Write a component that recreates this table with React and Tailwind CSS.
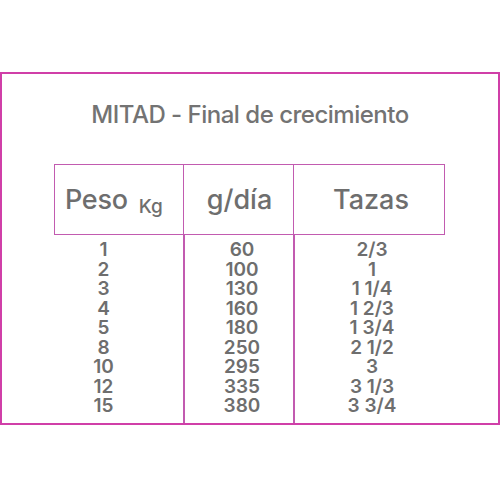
const rows = [
  ['1', '60', '2/3'],
  ['2', '100', '1'],
  ['3', '130', '1 1/4'],
  ['4', '160', '1 2/3'],
  ['5', '180', '1 3/4'],
  ['8', '250', '2 1/2'],
  ['10', '295', '3'],
  ['12', '335', '3 1/3'],
  ['15', '380', '3 3/4'],
];

export default function App() {
  return (
    <div
      className="w-[500px] h-[500px] bg-white pt-[72px]"
      style={{ fontFamily: 'Inter, "Noto Sans", sans-serif' }}
    >
      <div className="h-[353px] border-2 border-[#d03fa8] flex flex-col">
        <div className="h-[90px] pt-[23px] text-center text-[24px] font-medium text-[#737373] tracking-[-0.5px]">
          MITAD - Final de crecimiento
        </div>
        <div className="ml-[52px] w-[391px] flex-1 flex flex-col text-[#6e6e6e]">
          <div className="h-[71px] border border-[#c25bb0] flex font-medium">
            <div className="w-[128px] flex items-center pl-[10px] pt-[2px]">
              <span className="text-[27px] tracking-[-0.3px]">Peso</span>
              <span className="text-[19px] ml-[11px] mt-[13px]">Kg</span>
            </div>
            <div className="w-[110px] border-l border-[#c25bb0] flex items-center justify-center text-[27px] pt-[2px] pl-[2px]">
              g/día
            </div>
            <div className="flex-1 border-l border-[#c25bb0] flex items-center justify-center text-[27px] pt-[2px] pl-[4px]">
              Tazas
            </div>
          </div>
          <div className="flex-1 flex font-semibold text-[19px] leading-[19.5px]">
            <div className="w-[129px] pr-[30px] text-center pt-[5px]">
              {rows.map((r) => (
                <div key={r[0]}>{r[0]}</div>
              ))}
            </div>
            <div className="w-[110px] border-l-2 border-[#c25bb0] text-center pt-[5px] pl-[6px]">
              {rows.map((r) => (
                <div key={r[0]}>{r[1]}</div>
              ))}
            </div>
            <div className="flex-1 border-l-2 border-[#c25bb0] text-center pt-[5px] pl-[4px]">
              {rows.map((r) => (
                <div key={r[0]}>{r[2]}</div>
              ))}
            </div>
          </div>
        </div>
      </div>
    </div>
  );
}
